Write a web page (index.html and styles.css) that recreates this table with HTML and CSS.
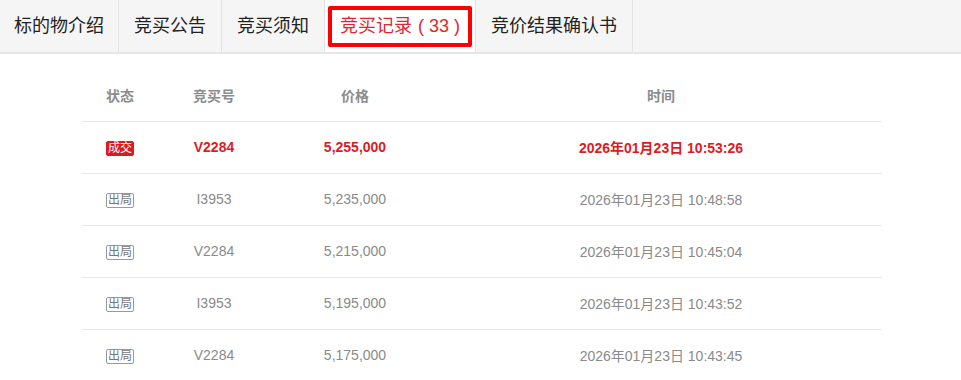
FILE: index.html
```html
<!DOCTYPE html>
<html lang="zh-CN">
<head>
    <meta charset="UTF-8">
    <meta name="viewport" content="width=device-width, initial-scale=1.0">
    <title>竞买记录</title>
    <link rel="stylesheet" href="styles.css">
</head>
<body>
    <div class="tabs">
        <div class="tab">标的物介绍</div>
        <div class="tab">竞买公告</div>
        <div class="tab">竞买须知</div>
        <div class="tab active">竞买记录<span class="count">(<span class="num">33</span>)</span></div>
        <div class="tab">竞价结果确认书</div>
    </div>

    <table class="records">
        <thead>
            <tr>
                <th class="col-status">状态</th>
                <th class="col-no">竞买号</th>
                <th class="col-price">价格</th>
                <th>时间</th>
            </tr>
        </thead>
        <tbody>
            <tr class="winner">
                <td><span class="badge badge-deal">成交</span></td>
                <td>V2284</td>
                <td>5,255,000</td>
                <td>2026年01月23日 10:53:26</td>
            </tr>
            <tr>
                <td><span class="badge badge-out">出局</span></td>
                <td>I3953</td>
                <td>5,235,000</td>
                <td>2026年01月23日 10:48:58</td>
            </tr>
            <tr>
                <td><span class="badge badge-out">出局</span></td>
                <td>V2284</td>
                <td>5,215,000</td>
                <td>2026年01月23日 10:45:04</td>
            </tr>
            <tr>
                <td><span class="badge badge-out">出局</span></td>
                <td>I3953</td>
                <td>5,195,000</td>
                <td>2026年01月23日 10:43:52</td>
            </tr>
            <tr>
                <td><span class="badge badge-out">出局</span></td>
                <td>V2284</td>
                <td>5,175,000</td>
                <td>2026年01月23日 10:43:45</td>
            </tr>
        </tbody>
    </table>
</body>
</html>
```

FILE: styles.css
```css
* {
    margin: 0;
    padding: 0;
    box-sizing: border-box;
}

body {
    font-family: "Liberation Sans", "Noto Sans CJK SC", sans-serif;
    background: #fff;
    color: #333;
}

.tabs {
    display: flex;
    height: 54px;
    background: #f5f5f5;
    border-bottom: 2px solid #e6e6e6;
}

.tab {
    position: relative;
    padding: 0 15px;
    line-height: 52px;
    font-size: 18px;
    color: #222;
    border-right: 1px solid #e3e3e3;
    white-space: nowrap;
}

.tab:first-child {
    padding: 0 14px;
}

.tab.active {
    background: #fff;
    color: #e0262c;
}

.tab .count {
    margin-left: 6px;
}

.tab .num {
    margin: 0 5px;
}

/* red frame round the current tab */
.tab.active::after {
    content: "";
    position: absolute;
    left: 3px;
    right: 3px;
    top: 6px;
    bottom: 5px;
    border: 4px solid #f00;
    border-radius: 2px;
}

.records {
    width: 800px;
    margin: 15px 0 0 82px;
    border-collapse: collapse;
    font-size: 14px;
    color: #8a8a8a;
}

.records th,
.records td {
    height: 52px;
    text-align: center;
    border-bottom: 1px solid #e8e8e8;
    vertical-align: middle;
}

.records th {
    font-weight: bold;
    color: #8c8c8c;
}

.col-status { width: 76px; }
.col-no { width: 112px; }
.col-price { width: 170px; }

.records tr.winner td {
    color: #de1b1f;
    font-weight: bold;
}

.badge {
    display: inline-block;
    width: 28px;
    height: 15px;
    line-height: 13px;
    font-size: 12px;
    font-weight: normal;
    border-radius: 2px;
    vertical-align: middle;
    position: relative;
    top: 1px;
}

.badge-deal {
    background: #dd1a1f;
    border: 1px solid #dd1a1f;
    color: #fff;
}

.badge-out {
    border: 1px solid #999;
    color: #777;
}
```
